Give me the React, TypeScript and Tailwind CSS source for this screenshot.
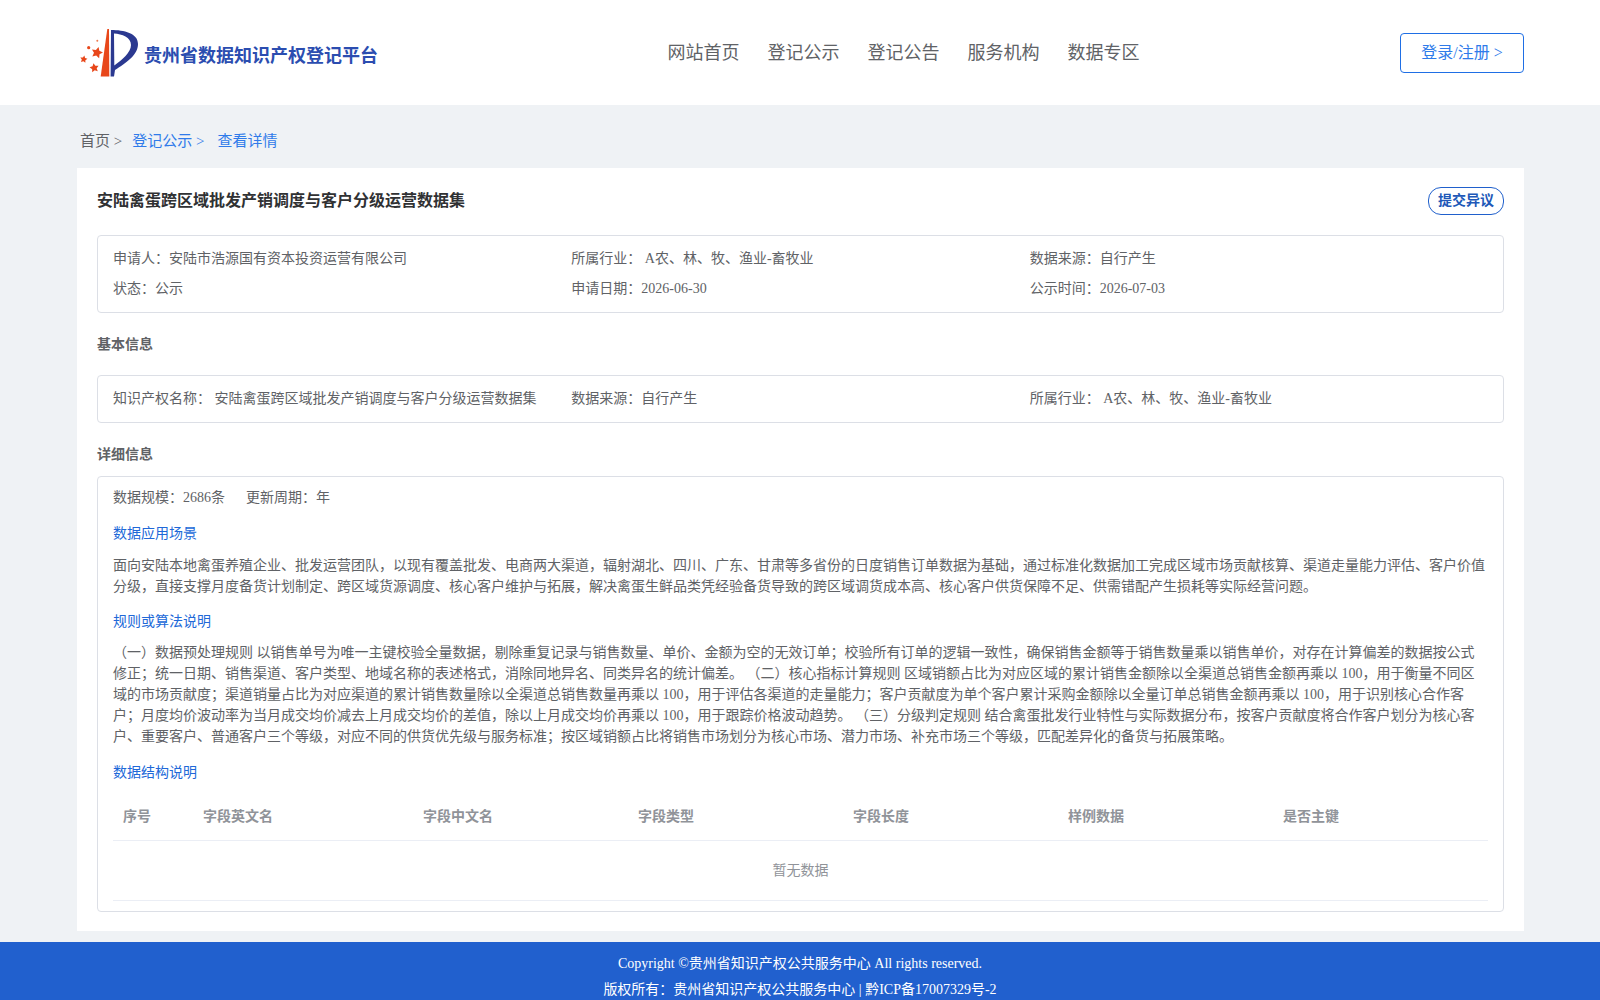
const sans = "font-['Liberation_Serif','Noto_Sans_CJK_SC',serif]";

function Star({ cx, cy, r, rot }: { cx: number; cy: number; r: number; rot: number }) {
  const pts: string[] = [];
  for (let i = 0; i < 10; i++) {
    const a = ((rot + i * 36 - 90) * Math.PI) / 180;
    const d = i % 2 === 0 ? r : r * 0.5;
    pts.push(`${(cx + d * Math.cos(a)).toFixed(2)},${(cy + d * Math.sin(a)).toFixed(2)}`);
  }
  return <polygon points={pts.join(" ")} fill="#e8471a" />;
}

function Logo() {
  return (
    <svg width="62" height="52" viewBox="0 0 62 52" className="shrink-0">
      <path d="M29.3 2 L31 2 L31.3 49.5 L22.7 49.5 Z" fill="#e8471a" />
      <path
        fillRule="evenodd"
        d="M33 3 C46 3 60 6 60 17 C60 28 48 36 37 43 L36 49.5 L32.6 49.5 Z M36 6.5 L36.3 38.5 C44 33 53 25.5 53 18 C53 10 44 7 36 6.5 Z"
        fill="#2b3990"
      />
      <Star cx={19} cy={25.7} r={6} rot={15} />
      <Star cx={5.7} cy={32.3} r={3.8} rot={10} />
      <Star cx={16.3} cy={41} r={4.8} rot={-10} />
      <circle cx="10.7" cy="20.7" r="1.6" fill="#e8471a" />
      <circle cx="19.3" cy="13.7" r="1" fill="#ee7a50" />
    </svg>
  );
}

function Panel({ rows }: { rows: string[][] }) {
  return (
    <div className="rounded-[4px] border border-[#dcdfe6] px-[15px] py-[8px]">
      {rows.map((r, i) => (
        <div key={i} className="grid grid-cols-3 text-[14px] leading-[30px] text-[#606266]">
          {r.map((c) => (
            <div key={c}>{c}</div>
          ))}
        </div>
      ))}
    </div>
  );
}

const heads = ["序号", "字段英文名", "字段中文名", "字段类型", "字段长度", "样例数据", "是否主键"];
const widths = ["w-[80px]", "w-[220px]", "w-[215px]", "w-[215px]", "w-[215px]", "w-[215px]", "flex-1"];

export default function App() {
  return (
    <div className={`min-h-[1000px] bg-[#eff2f5] ${sans}`}>
      <header className="flex h-[105px] items-center justify-between bg-white pl-[78px] pr-[76px]">
        <div className="flex items-center">
          <Logo />
          <span className="ml-[4px] mt-[8px] text-[18px] font-bold text-[#2b4db0]">贵州省数据知识产权登记平台</span>
        </div>
        <nav className="ml-[29px] mt-[1px] flex gap-[28px] text-[18px] text-[#606266]">
          {["网站首页", "登记公示", "登记公告", "服务机构", "数据专区"].map((t) => (
            <span key={t}>{t}</span>
          ))}
        </nav>
        <button className="h-[40px] w-[124px] rounded-[4px] border border-[#1f6fe5] pt-[1px] text-[16px] text-[#2f7bea]">登录/注册 &gt;</button>
      </header>

      <main className="mx-[77px] w-[1447px]">
        <div className="flex h-[63px] items-center pl-[3px] pt-[10px] text-[15px]">
          <span className="text-[#606266]">首页 &gt;</span>
          <span className="ml-[10px] text-[#2f7bea]">登记公示 &gt;</span>
          <span className="ml-[13px] text-[#2f7bea]">查看详情</span>
        </div>

        <section className="bg-white px-[20px] pb-[19px] pt-[19px]">
          <div className="flex h-[27px] items-center justify-between">
            <h1 className="text-[16px] font-bold leading-[24px] text-[#303133]">安陆禽蛋跨区域批发产销调度与客户分级运营数据集</h1>
            <button className="h-[28px] w-[76px] rounded-[13px] border border-[#2060cc] text-[14px] font-bold text-[#2058b8]">提交异议</button>
          </div>

          <div className="mt-[21px]">
            <Panel
              rows={[
                ["申请人：安陆市浩源国有资本投资运营有限公司", "所属行业： A农、林、牧、渔业-畜牧业", "数据来源：自行产生"],
                ["状态：公示", "申请日期：2026-06-30", "公示时间：2026-07-03"],
              ]}
            />
          </div>

          <h2 className="mt-[22px] text-[14px] font-bold leading-[20px] text-[#606266]">基本信息</h2>
          <div className="mt-[20px]">
            <Panel rows={[["知识产权名称： 安陆禽蛋跨区域批发产销调度与客户分级运营数据集", "数据来源：自行产生", "所属行业： A农、林、牧、渔业-畜牧业"]]} />
          </div>

          <h2 className="mt-[22px] text-[14px] font-bold leading-[20px] text-[#606266]">详细信息</h2>

          <div className="mt-[11px] rounded-[4px] border border-[#dcdfe6] px-[15px] pb-[10px] pt-[11px] text-[14px] text-[#606266]">
            <div className="leading-[20px]">
              数据规模：2686条<span className="ml-[21px]">更新周期：年</span>
            </div>
            <div className="mt-[16px] leading-[20px] text-[#2068d8]">数据应用场景</div>
            <p className="mt-[11px] leading-[21px]">
              面向安陆本地禽蛋养殖企业、批发运营团队，以现有覆盖批发、电商两大渠道，辐射湖北、四川、广东、甘肃等多省份的日度销售订单数据为基础，通过标准化数据加工完成区域市场贡献核算、渠道走量能力评估、客户价值分级，直接支撑月度备货计划制定、跨区域货源调度、核心客户维护与拓展，解决禽蛋生鲜品类凭经验备货导致的跨区域调货成本高、核心客户供货保障不足、供需错配产生损耗等实际经营问题。
            </p>
            <div className="mt-[15px] leading-[20px] text-[#2068d8]">规则或算法说明</div>
            <p className="mt-[10px] leading-[21px]">
              （一）数据预处理规则 以销售单号为唯一主键校验全量数据，剔除重复记录与销售数量、单价、金额为空的无效订单；校验所有订单的逻辑一致性，确保销售金额等于销售数量乘以销售单价，对存在计算偏差的数据按公式修正；统一日期、销售渠道、客户类型、地域名称的表述格式，消除同地异名、同类异名的统计偏差。 （二）核心指标计算规则 区域销额占比为对应区域的累计销售金额除以全渠道总销售金额再乘以 100，用于衡量不同区域的市场贡献度；渠道销量占比为对应渠道的累计销售数量除以全渠道总销售数量再乘以 100，用于评估各渠道的走量能力；客户贡献度为单个客户累计采购金额除以全量订单总销售金额再乘以 100，用于识别核心合作客户；月度均价波动率为当月成交均价减去上月成交均价的差值，除以上月成交均价再乘以 100，用于跟踪价格波动趋势。 （三）分级判定规则 结合禽蛋批发行业特性与实际数据分布，按客户贡献度将合作客户划分为核心客户、重要客户、普通客户三个等级，对应不同的供货优先级与服务标准；按区域销额占比将销售市场划分为核心市场、潜力市场、补充市场三个等级，匹配差异化的备货与拓展策略。
            </p>
            <div className="mt-[16px] leading-[20px] text-[#2068d8]">数据结构说明</div>
            <div className="mt-[10px]">
              <div className="flex h-[48px] items-center border-b border-[#ebeef5] font-bold text-[#909399]">
                {heads.map((h, i) => (
                  <div key={h} className={`${widths[i]} pl-[10px]`}>{h}</div>
                ))}
              </div>
              <div className="flex h-[60px] items-center justify-center border-b border-[#ebeef5] text-[#909399]">暂无数据</div>
            </div>
          </div>
        </section>
      </main>

      <footer className="mt-[11px] flex h-[58px] flex-col items-center bg-[#2160ce] pt-[9px] text-[14px] leading-[26px] text-white">
        <div>Copyright ©贵州省知识产权公共服务中心 All rights reserved.</div>
        <div>版权所有：贵州省知识产权公共服务中心 | 黔ICP备17007329号-2</div>
      </footer>
    </div>
  );
}
